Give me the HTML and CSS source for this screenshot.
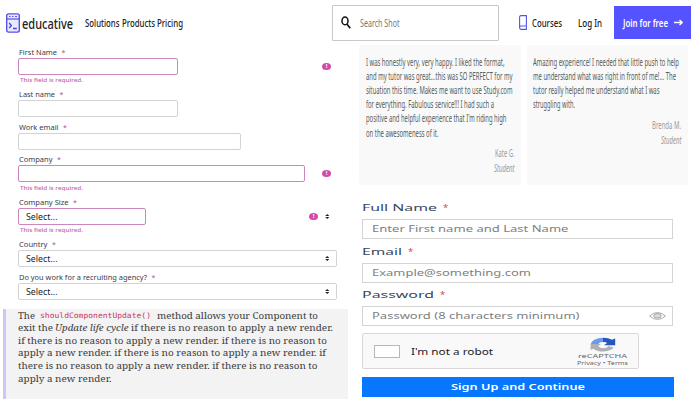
FILE: index.html
```html
<!DOCTYPE html>
<html lang="en">
<head>
<meta charset="utf-8">
<title>Educative</title>
<link rel="stylesheet" href="styles.css">
</head>
<body>
<header class="header">
  <svg class="logo" viewBox="0 0 14 20"><rect x=".7" y=".9" width="12.6" height="18.2" rx="1.8" fill="#e9e8ff" stroke="#5553e8" stroke-width="1.4"/><path d="M1 6h12" stroke="#5553e8" stroke-width="1.2"/><path d="M3 3.5h1.5M6 3.5h1.5M9 3.5h2" stroke="#5553e8"/><path d="M3.2 10l2.2 2.5-2.2 2.5M7 15.5h3.8" fill="none" stroke="#4543d8" stroke-width="1.3"/></svg>
  <span class="brand" data-fit="51">educative</span>
  <nav class="nav"><span data-fit="34.5">Solutions</span><span data-fit="33">Products</span><span data-fit="26">Pricing</span></nav>
  <div class="search">
    <svg class="lens" viewBox="0 0 10 13"><ellipse cx="4" cy="4.9" rx="3" ry="3.9" fill="none" stroke="#111" stroke-width="1.5"/><path d="M6 8.2l3.3 4" stroke="#111" stroke-width="1.7"/></svg>
    <span data-fit="39.5">Search Shot</span>
  </div>
  <svg class="book" viewBox="0 0 8 15"><path d="M.6 12.8V2.2Q.6.6 2 .6h5.4v13.8H2Q.6 14.4.6 12.8Q.6 11 2 11h5.4" fill="none" stroke="#5553e8" stroke-width="1.1"/></svg>
  <span class="link courses" data-fit="30">Courses</span>
  <span class="link login" data-fit="24">Log In</span>
  <div class="join"><span data-fit="45">Join for free</span><svg class="arrow" viewBox="0 0 9 7"><path d="M0 3.5h8M5.5 1l2.7 2.5L5.5 6" fill="none" stroke="#fff" stroke-width="1.4"/></svg></div>
</header>
<main class="main">
  <section class="left">
    <form class="lead">
      <div class="field"><div class="label"><span data-fit="38">First Name</span><i>*</i></div><div class="row"><div class="box short bad"></div><b class="alert">!</b></div><div class="error"><span data-fit="63">This field is required.</span></div></div>
      <div class="field"><div class="label"><span data-fit="36">Last name</span><i>*</i></div><div class="row"><div class="box short"></div></div></div>
      <div class="field"><div class="label"><span data-fit="39.5">Work email</span><i>*</i></div><div class="row"><div class="box mid"></div></div></div>
      <div class="field"><div class="label"><span data-fit="33.5">Company</span><i>*</i></div><div class="row"><div class="box long bad"></div><b class="alert">!</b></div><div class="error"><span data-fit="63">This field is required.</span></div></div>
      <div class="field"><div class="label"><span data-fit="49.5">Company Size</span><i>*</i></div><div class="row"><div class="box size bad"><span data-fit="31.5">Select...</span></div><b class="alert inset">!</b><svg class="sort" viewBox="0 0 5 6"><path d="M0 2.5L2.5 0 5 2.5zM0 3.5L2.5 6 5 3.5z"/></svg></div><div class="error"><span data-fit="63">This field is required.</span></div></div>
      <div class="field"><div class="label"><span data-fit="28.5">Country</span><i>*</i></div><div class="row"><div class="box full"><span data-fit="31.5">Select...</span><svg class="sort" viewBox="0 0 5 6"><path d="M0 2.5L2.5 0 5 2.5zM0 3.5L2.5 6 5 3.5z"/></svg></div></div></div>
      <div class="field"><div class="label"><span data-fit="128">Do you work for a recruiting agency?</span><i>*</i></div><div class="row"><div class="box full"><span data-fit="31.5">Select...</span><svg class="sort" viewBox="0 0 5 6"><path d="M0 2.5L2.5 0 5 2.5zM0 3.5L2.5 6 5 3.5z"/></svg></div></div></div>
    </form>
    <blockquote class="quote">
      <div class="line"><span data-fit="17">The</span><code data-fit="111">shouldComponentUpdate()</code><span data-fit="161">method allows your Component to</span></div>
      <div class="line tight"><span data-fit="35">exit the</span><em data-fit="73.5">Update life cycle</em><span data-fit="202">if there is no reason to apply a new render.</span></div>
      <div class="line"><span data-fit="309">if there is no reason to apply a new render. if there is no reason to</span></div>
      <div class="line"><span data-fit="308">apply a new render. if there is no reason to apply a new render. if</span></div>
      <div class="line"><span data-fit="299.5">there is no reason to apply a new render. if there is no reason to</span></div>
      <div class="line"><span data-fit="93.5">apply a new render.</span></div>
    </blockquote>
  </section>
  <section class="right">
    <div class="cards">
      <article class="card">
        <p><span data-fit="138.5">I was honestly very, very happy. I liked the format,</span></p>
        <p><span data-fit="146.5">and my tutor was great...this was SO PERFECT for my</span></p>
        <p><span data-fit="146.5">situation this time. Makes me want to use Study.com</span></p>
        <p><span data-fit="128">for everything. Fabulous service!!! I had such a</span></p>
        <p><span data-fit="140.5">positive and helpful experience that I'm riding high</span></p>
        <p><span data-fit="72.5">on the awesomeness of it.</span></p>
        <footer><div><span data-fit="19.5">Kate G.</span></div><div><em data-fit="20.5">Student</em></div></footer>
      </article>
      <article class="card">
        <p><span data-fit="146">Amazing experience! I needed that little push to help</span></p>
        <p><span data-fit="143">me understand what was right in front of me!... The</span></p>
        <p><span data-fit="126.5">tutor really helped me understand what I was</span></p>
        <p><span data-fit="42">struggling with.</span></p>
        <footer><div><span data-fit="29">Brenda M.</span></div><div><em data-fit="20.5">Student</em></div></footer>
      </article>
    </div>
    <form class="signup">
      <div class="group"><div class="title"><span data-fit="75">Full Name</span><i>*</i></div><div class="input"><span data-fit="196.5">Enter First name and Last Name</span></div></div>
      <div class="group"><div class="title"><span data-fit="40">Email</span><i>*</i></div><div class="input"><span data-fit="159">Example@something.com</span></div></div>
      <div class="group"><div class="title"><span data-fit="72">Password</span><i>*</i></div><div class="input"><span data-fit="207.5">Password (8 characters minimum)</span><svg class="eye" viewBox="0 0 17 8"><path d="M.6 4Q4 .6 8.500 .6T16.400 4Q13 7.400 8.500 7.400T.6 4z" fill="none" stroke="#aaa"/><ellipse cx="8.500" cy="3.800" rx="3.800" ry="2.200" fill="#ddd" stroke="#999" stroke-width=".9"/></svg></div></div>
      <div class="captcha">
        <div class="check"></div><span class="robot" data-fit="82">I'm not a robot</span>
        <div class="badge">
          <svg class="recap" viewBox="0 0 28 16"><path d="M1 8A13 7.500 0 0 1 14 .8V5.400Q10 5.400 9 8z" fill="#6b9bea"/><path d="M14 .8Q20 .8 23.500 3L27 1.500V8.800H15L18.500 6.500Q17 5.200 14 5.400z" fill="#2456bd"/><path d="M.8 7.500H12L8.800 9.500Q11 12 14 12Q18 12 20 9.500L25.500 11.500Q21 15.500 14 15.500Q7 15.500 4 12.500L.8 13.500z" fill="#adb0b5"/></svg>
          <div class="rc"><span data-fit="49">reCAPTCHA</span></div>
          <div class="terms"><span data-fit="51">Privacy • Terms</span></div>
        </div>
      </div>
      <div class="submit"><span data-fit="134">Sign Up and Continue</span></div>
    </form>
  </section>
</main>
<script src="fit.js"></script>
</body>
</html>
```
FILE: styles.css
```css
* { box-sizing: border-box; }
body { margin: 0; width: 700px; height: 400px; overflow: hidden; background: #fff; font-family: "Noto Sans", "Open Sans", sans-serif; color: #333; }
svg { display: block; flex: none; }
p { margin: 0; }
[data-fit] { display: inline-block; flex: none; white-space: nowrap; transform-origin: 0 50%; }

.header { display: flex; align-items: center; height: 45px; padding-left: 6px; color: #222; }
.logo { width: 14px; height: 20px; margin-right: 2px; }
.brand { padding-top: 1px; font-size: 14px; font-weight: 500; }
.nav { display: flex; gap: 2px; margin-left: 12px; font-size: 11.500px; font-weight: 500; }
.search { display: flex; align-items: center; width: 167px; height: 36px; margin-left: 149px; padding-left: 8px; border: 1px solid #c8c8c8; border-radius: 1px; font-size: 10.500px; color: #777; }
.lens { width: 10px; height: 13px; margin-right: 9px; }
.book { width: 8px; height: 15px; margin-left: 20px; }
.link { font-size: 11.500px; font-weight: 500; }
.courses { margin-left: 5px; }
.login { margin-left: 16px; }
.join { display: flex; align-items: center; width: 77px; height: 33px; margin-left: 12px; padding-left: 9px; background: #5553ff; color: #fff; font-size: 11.500px; font-weight: 600; }
.arrow { width: 9px; height: 7px; margin-left: 6px; }

.main { display: flex; height: 355px; }
.left { width: 350px; padding-top: 1.500px; }
.lead { height: 262.500px; padding-left: 18px; }
.field { margin-bottom: 4.300px; }
.label { display: flex; align-items: center; height: 11px; padding-left: 1px; font-size: 7px; color: #3c3c46; }
.label i { margin-left: 4.500px; font-style: normal; color: #b0509c; }
.row { display: flex; align-items: center; height: 17px; }
.box { display: flex; align-items: center; height: 17px; padding: 0 6.500px 0 7px; border: 1px solid #d3d3d3; border-radius: 2px; font-size: 8px; color: #222; }
.box.bad { border-color: #cc88be; }
.short { width: 160px; }
.mid { width: 223px; }
.long { width: 287px; }
.size { width: 128px; }
.full { width: 319px; }
.alert { display: flex; align-items: center; justify-content: center; width: 9px; height: 7px; margin-left: auto; margin-right: 19px; border-radius: 50%; background: #d14aa8; color: #fff; font-size: 6px; line-height: 7px; }
.alert.inset { margin-right: 7px; }
.sort { width: 4.500px; height: 5px; margin-left: auto; fill: #222; }
.alert + .sort { margin: 0 20.500px 0 0; }
.error { display: flex; align-items: center; height: 10.500px; padding: 1px 0 0 1.500px; font-size: 6px; font-weight: 500; color: #c066ab; }

.quote { width: 345px; height: 90px; margin: 0 0 0 3px; padding-left: 11.500px; border-left: 3px solid #cbc8f8; background: #f3f3f3; font-family: "Noto Serif", "DejaVu Serif", serif; font-size: 8.500px; color: #3c3c3c; }
.line { display: flex; align-items: center; gap: 5.500px; height: 12.550px; }
.line.tight { gap: 2.700px; }
.quote code { font-family: "DejaVu Sans Mono", monospace; font-size: 7.500px; color: #c7355f; }

.right { width: 350px; padding-left: 9px; }
.cards { display: flex; gap: 5.500px; height: 140px; }
.card { width: 162px; padding: 10px 6.500px 0; border-radius: 2px; background: #f9f9f9; font-size: 10px; color: #555c5a; }
.card + .card { width: 161px; }
.card p { display: flex; align-items: center; height: 14.100px; }
.card footer { padding-top: 6px; color: #999; }
.card footer div { display: flex; align-items: center; justify-content: flex-end; height: 15px; }

.signup { padding: 15.500px 0 0 3px; }
.group { width: 311px; height: 43.500px; }
.title { display: flex; align-items: center; height: 18.500px; padding-bottom: 4px; font-size: 9.500px; color: #39465e; }
.title i { margin-left: 6px; font-style: normal; color: #d94452; }
.input { display: flex; align-items: center; height: 20px; padding: 0 6px 1px 9px; border: 1px solid #d4d4d4; font-size: 8.500px; color: #808080; }
.eye { width: 17px; height: 8px; margin-left: auto; }
.captcha { display: flex; align-items: center; width: 277px; height: 36px; margin-top: 2px; padding-left: 11px; border: 1px solid #d8d8d8; border-radius: 2px; background: #f9f9f9; }
.check { width: 26px; height: 13px; border: 1px solid #b8b8b8; background: #fff; }
.robot { margin-left: 11px; font-size: 9px; color: #222; }
.badge { display: flex; flex-direction: column; align-items: center; width: 51px; margin: 1px 10px 0 auto; color: #666; }
.recap { width: 28px; height: 15px; }
.rc, .terms { display: flex; align-items: center; height: 6px; font-size: 6px; }
.rc { height: 8px; }
.submit { display: flex; align-items: center; justify-content: center; width: 312px; height: 19.500px; margin-top: 8px; background: #0877ff; color: #fff; font-size: 8.500px; font-weight: 600; }
```
FILE: fit.js
```js
// Condense or widen each run of text to the width in its data-fit attribute.
document.querySelectorAll("[data-fit]").forEach(function (el) {
  var natural = el.getBoundingClientRect().width;
  var target = parseFloat(el.dataset.fit);
  el.style.marginRight = (target - natural) + "px";
  el.style.transform = "scaleX(" + target / natural + ")";
});
```
